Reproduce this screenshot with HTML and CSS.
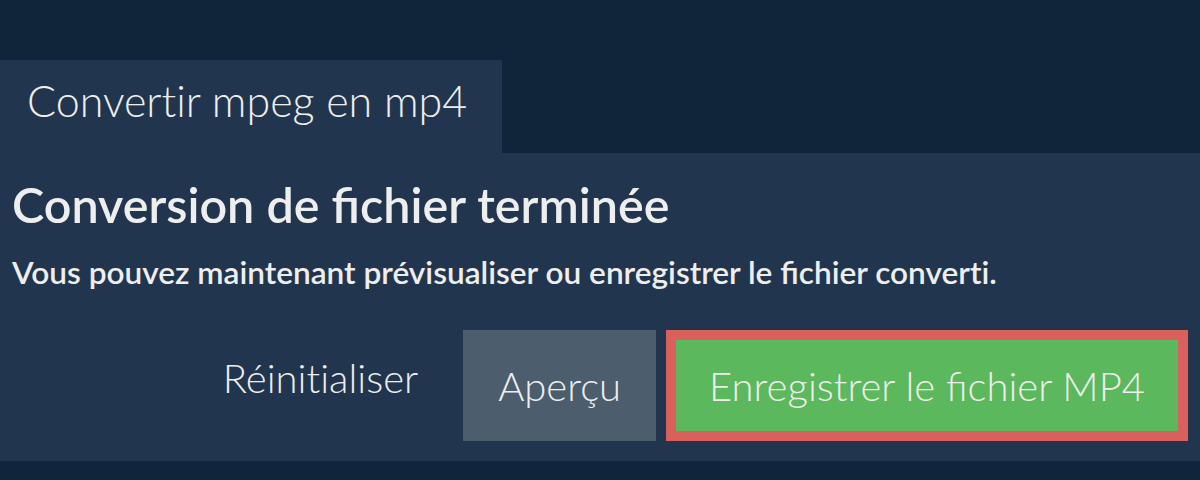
FILE: index.html
```html
<!DOCTYPE html>
<html lang="fr">
<head>
    <meta charset="UTF-8">
    <title>Convertir mpeg en mp4</title>
    <link rel="stylesheet" href="styles.css">
</head>
<body>
    <div class="tabs">
        <div class="tab">Convertir mpeg en mp4</div>
    </div>
    <main class="panel">
        <h1>Conversion de fichier terminée</h1>
        <p>Vous pouvez maintenant prévisualiser ou enregistrer le fichier <span class="nolig">converti.</span></p>
        <div class="actions">
            <button class="btn btn-link">Réinitialiser</button>
            <button class="btn btn-grey">Aperçu</button>
            <button class="btn btn-save">Enregistrer le fichier MP4</button>
        </div>
    </main>
</body>
</html>
```

FILE: styles.css
```css
body {
    font-family: Lato, 'Liberation Sans', Arial, sans-serif;
    margin: 0;
    padding: 0;
    background-color: #10243a;
    color: #eeeeee;
}
.tabs {
    padding-top: 60px;
    display: flex;
}
.tab {
    width: 502px;
    height: 93px;
    box-sizing: border-box;
    padding: 0 0 12px 27px;
    background-color: #21364e;
    font-size: 43px;
    line-height: 1.2;
    font-weight: 300;
    font-variant-ligatures: none;
    display: flex;
    align-items: center;
}
.panel {
    background-color: #21364e;
    height: 308px;
    box-sizing: border-box;
    padding: 22px 12px 0 12px;
}
h1 {
    margin: 0;
    font-size: 48.5px;
    line-height: 1.2;
    font-weight: 600;
}
p {
    margin: 21px 0 0 0;
    font-size: 31.6px;
    line-height: 1.2;
    font-weight: 600;
}
.nolig {
    font-variant-ligatures: none;
}
.actions {
    display: flex;
    justify-content: flex-end;
    margin-top: 38px;
}
.btn {
    font-family: inherit;
    font-size: 40px;
    line-height: 1.2;
    font-weight: 300;
    color: #eeeeee;
    border: none;
    height: 111px;
    padding: 0 35px;
    margin-left: 10px;
    cursor: pointer;
}
.btn-link {
    background: none;
    padding-bottom: 16px;
    font-variant-ligatures: none;
}
.btn-grey {
    background-color: #4c5d6e;
}
.btn-save {
    background-color: #5cb85c;
    border: 10px solid #d9605b;
    padding: 0 33px;
}
```
